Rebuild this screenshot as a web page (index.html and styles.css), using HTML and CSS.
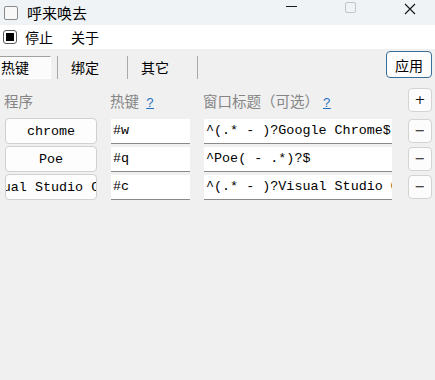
FILE: index.html
```html
<!DOCTYPE html>
<html lang="zh-CN">
<head>
  <meta charset="UTF-8">
  <title>呼来唤去</title>
  <link rel="stylesheet" href="styles.css">
</head>
<body>
  <div class="titlebar">
    <div class="app-icon"></div>
    <span class="title">呼来唤去</span>
    <div class="controls">
      <span class="ctl-min"></span>
      <span class="ctl-max"></span>
      <svg class="ctl-close" width="12" height="12" viewBox="0 0 12 12"><path d="M1 1L11 11M11 1L1 11" stroke="#1a1a1a" stroke-width="1.2"/></svg>
    </div>
  </div>
  <div class="menubar">
    <div class="stop-box"><span></span></div>
    <span class="menu-item">停止</span>
    <span class="menu-item">关于</span>
  </div>
  <div class="tabs">
    <span class="tab active">热键</span>
    <span class="sep"></span>
    <span class="tab">绑定</span>
    <span class="sep"></span>
    <span class="tab">其它</span>
    <span class="sep"></span>
    <button class="apply">应用</button>
  </div>
  <div class="grid">
    <div class="head">程序</div>
    <div class="head">热键 <a class="help">?</a></div>
    <div class="head">窗口标题（可选）<a class="help">?</a></div>
    <div class="cell-btn"><button class="small add">+</button></div>

    <button class="prog"><span>chrome</span></button>
    <div class="field">#w</div>
    <div class="field">^(.* - )?Google Chrome$</div>
    <div class="cell-btn"><button class="small">−</button></div>

    <button class="prog"><span>Poe</span></button>
    <div class="field">#q</div>
    <div class="field">^Poe( - .*)?$</div>
    <div class="cell-btn"><button class="small">−</button></div>

    <button class="prog"><span>Visual Studio Code</span></button>
    <div class="field">#c</div>
    <div class="field">^(.* - )?Visual Studio Code$</div>
    <div class="cell-btn"><button class="small">−</button></div>
  </div>
</body>
</html>
```

FILE: styles.css
```css
html, body {
  margin: 0;
  height: 100%;
}

body {
  background: #f0f0f0;
  font-family: "Noto Sans CJK SC", "Noto Sans", sans-serif;
  font-size: 14px;
  color: #000;
}

.titlebar {
  height: 25px;
  background: #eff3f6;
  display: flex;
  align-items: center;
}

.app-icon {
  width: 12px;
  height: 12px;
  margin-left: 4px;
  border: 1px solid #8a8a8a;
  border-radius: 2px;
  background: #f8f8f8;
}

.title {
  margin-left: 9px;
  font-size: 15px;
  line-height: 25px;
}

.controls {
  margin-left: auto;
  display: flex;
  align-items: center;
  height: 25px;
}

.ctl-min {
  width: 11px;
  height: 1px;
  background: #1a1a1a;
  margin-right: 48px;
  margin-top: -12px;
}

.ctl-max {
  width: 9px;
  height: 9px;
  border: 1px solid #c4c4c4;
  border-radius: 2px;
  margin-right: 48px;
  margin-top: -11px;
}

.ctl-close {
  margin-right: 19px;
  margin-top: -8px;
}

.menubar {
  height: 24px;
  background: #fff;
  display: flex;
  align-items: center;
}

.stop-box {
  width: 12px;
  height: 12px;
  margin-left: 3px;
  border: 1px solid #5a5a5a;
  border-radius: 3px;
  background: #fff;
  display: flex;
  align-items: center;
  justify-content: center;
}

.stop-box span {
  width: 8px;
  height: 8px;
  background: #000;
}

.menu-item {
  margin-left: 8px;
  margin-right: 10px;
  line-height: 24px;
}

.tabs {
  display: flex;
  align-items: center;
  height: 32px;
  margin-top: 2px;
}

.tab {
  line-height: 21px;
  width: 69px;
  padding-left: 13px;
  box-sizing: border-box;
}

.tab.active {
  padding: 0 0 0 1px;
  width: 52px;
  border-top: 1px solid #a0a0a0;
  border-left: 1px solid #a0a0a0;
  border-bottom: 1px solid #ffffff;
  border-right: 1px solid #ffffff;
  background: #fbfbfb;
  margin-left: -1px;
  margin-right: 6px;
}

.sep {
  width: 1px;
  height: 23px;
  background: #a9a9a9;
}

.apply {
  margin-left: auto;
  margin-right: 3px;
  width: 46px;
  height: 27px;
  padding: 0;
  border: 1px solid #3a6f9a;
  border-radius: 4px;
  background: #fdfdfd;
  font-family: inherit;
  font-size: 14px;
  margin-top: -5px;
}

.grid {
  display: grid;
  grid-template-columns: 92px 79px 188px 26px;
  column-gap: 14px;
  row-gap: 2px;
  padding: 4px 0 0 5px;
  align-items: center;
}

.head {
  color: #858585;
  height: 29px;
  line-height: 20px;
  padding-top: 4px;
  box-sizing: border-box;
  margin-left: -1px;
  font-size: 14.5px;
  white-space: nowrap;
}

.help {
  color: #1e6fc0;
  text-decoration: underline;
  font-family: "Liberation Mono", monospace;
  font-size: 13px;
  margin-left: 4px;
}

.cell-btn {
  display: flex;
  justify-content: flex-end;
}

.small {
  width: 24px;
  height: 24px;
  padding: 0;
  border: 1px solid #d3d3d3;
  border-radius: 4px;
  background: #fcfcfc;
  font-family: "DejaVu Sans", sans-serif;
  font-size: 13px;
  color: #111;
  line-height: 20px;
}

.add {
  margin-top: -4px;
}

.prog {
  height: 26px;
  padding: 0;
  border: 1px solid #d0d0d0;
  border-radius: 4px;
  background: #fdfdfd;
  display: flex;
  justify-content: center;
  align-items: center;
  overflow: hidden;
  white-space: nowrap;
  font-family: "Liberation Mono", monospace;
  font-size: 13.4px;
  color: #000;
}

.field {
  height: 24px;
  line-height: 24px;
  background: #fff;
  border-bottom: 1px solid #8a8a8a;
  padding: 0 2px;
  overflow: hidden;
  white-space: nowrap;
  font-family: "Liberation Mono", monospace;
  font-size: 13.4px;
}
```
